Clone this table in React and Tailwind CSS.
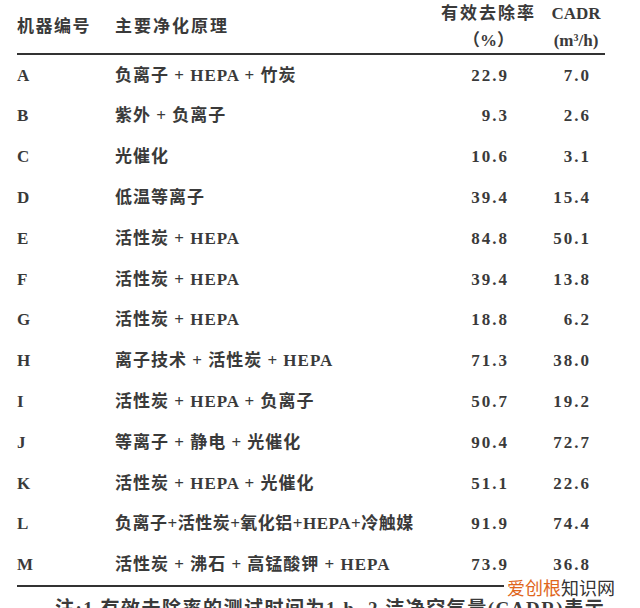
const rows = [
  ["A", "负离子 + HEPA + 竹炭", "22.9", "7.0"],
  ["B", "紫外 + 负离子", "9.3", "2.6"],
  ["C", "光催化", "10.6", "3.1"],
  ["D", "低温等离子", "39.4", "15.4"],
  ["E", "活性炭 + HEPA", "84.8", "50.1"],
  ["F", "活性炭 + HEPA", "39.4", "13.8"],
  ["G", "活性炭 + HEPA", "18.8", "6.2"],
  ["H", "离子技术 + 活性炭 + HEPA", "71.3", "38.0"],
  ["I", "活性炭 + HEPA + 负离子", "50.7", "19.2"],
  ["J", "等离子 + 静电 + 光催化", "90.4", "72.7"],
  ["K", "活性炭 + HEPA + 光催化", "51.1", "22.6"],
  ["L", "负离子+活性炭+氧化铝+HEPA+冷触媒", "91.9", "74.4"],
  ["M", "活性炭 + 沸石 + 高锰酸钾 + HEPA", "73.9", "36.8"],
];

const serif = { fontFamily: '"Liberation Serif", "Noto Sans CJK SC", serif' };

export default function App() {
  return (
    <div
      className="relative w-[640px] h-[608px] overflow-hidden bg-white text-[#3a3a3a] font-bold"
      style={serif}
    >
      {/* header */}
      <div className="flex h-[53px] pl-[17px] text-[17px]">
        <div className="w-[98px] flex items-center tracking-[1.5px]">机器编号</div>
        <div className="w-[325px] flex items-center tracking-[2px]">主要净化原理</div>
        <div className="w-[97px] flex flex-col items-center leading-[27px]">
          <div className="tracking-[2px]">有效去除率</div>
          <div>（%）</div>
        </div>
        <div className="ml-[10px] w-[58px] flex flex-col items-center leading-[27px]">
          <div>CADR</div>
          <div className="whitespace-nowrap">
            (m<sup className="text-[10px]">3</sup>/h)
          </div>
        </div>
      </div>
      <div className="ml-[17px] w-[588px] h-[2px] bg-[#333]" />

      {/* rows */}
      <div className="pl-[17px] text-[17px]">
        {rows.map((r) => (
          <div key={r[0]} className="flex items-center h-[40.8px]">
            <div className="w-[98px]">{r[0]}</div>
            <div
              className={
                "w-[325px] whitespace-nowrap " +
                (r[0] === "L" ? "tracking-[0.5px]" : "tracking-[1px]")
              }
            >
              {r[1]}
            </div>
            <div className="w-[97px] text-right pr-[28px] tracking-[2px]">{r[2]}</div>
            <div className="ml-[10px] w-[58px] text-right pr-[14px] tracking-[2px]">{r[3]}</div>
          </div>
        ))}
      </div>
      <div className="ml-[17px] w-[588px] h-[2px] bg-[#333]" />

      {/* footnote */}
      <div className="mt-[12px] pl-[55px] text-[19px] leading-none whitespace-nowrap tracking-[1.5px]">
        注:1 有效去除率的测试时间为1 h, 2 洁净空气量(CADR)表示
      </div>

      {/* watermark */}
      <div
        className="absolute left-[504px] top-[578px] bg-white pl-[3px] pr-[6px] text-[18px] leading-[19px] font-normal"
        style={{ fontFamily: '"Noto Sans CJK SC", sans-serif' }}
      >
        <span className="text-[#e0661c]">爱创根</span>
        <span className="text-[#333]">知识网</span>
      </div>
    </div>
  );
}
